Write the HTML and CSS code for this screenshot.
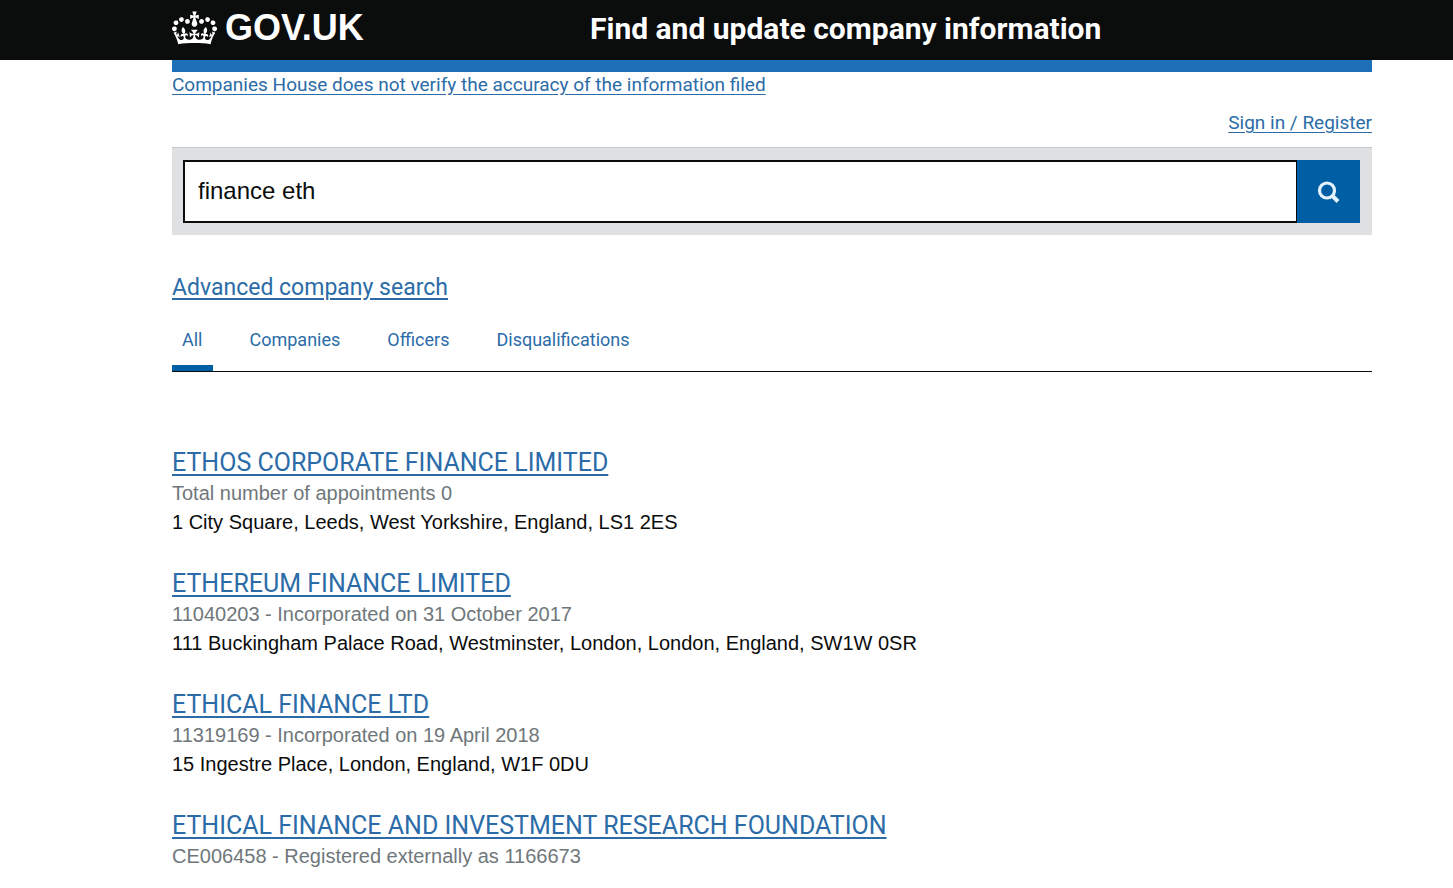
FILE: index.html
```html
<!DOCTYPE html>
<html lang="en">
<head>
  <meta charset="UTF-8" />
  <meta name="viewport" content="width=device-width, initial-scale=1.0" />
  <title>finance eth - Find and update company information - GOV.UK</title>
  <link rel="stylesheet" href="styles.css">
</head>
<body>
  <header class="site-header">
    <a class="logo" href="#">
      <svg class="crown" viewBox="0 0 132 97" aria-hidden="true">
        <path fill="currentColor" fill-rule="evenodd" d="M25 30.2c3.5 1.5 7.7-.2 9.1-3.7 1.5-3.6-.2-7.8-3.9-9.2-3.6-1.4-7.6.3-9.1 3.9-1.4 3.5.3 7.5 3.9 9zM9 39.5c3.6 1.5 7.8-.2 9.2-3.7 1.5-3.6-.2-7.8-3.9-9.1-3.6-1.5-7.6.2-9.1 3.8-1.4 3.5.3 7.5 3.8 9zM4.4 57.2c3.5 1.5 7.7-.2 9.1-3.8 1.5-3.6-.2-7.7-3.9-9.1-3.5-1.5-7.6.3-9.1 3.8-1.4 3.5.3 7.6 3.9 9.1zm38.3-21.4c3.5 1.5 7.7-.2 9.1-3.8 1.5-3.6-.2-7.7-3.9-9.1-3.6-1.5-7.6.3-9.1 3.8-1.3 3.6.4 7.7 3.9 9.1zm64.4-5.6c-3.6 1.5-7.8-.2-9.1-3.7-1.5-3.6.2-7.8 3.8-9.2 3.6-1.4 7.7.3 9.2 3.9 1.3 3.5-.4 7.5-3.9 9zm15.9 9.3c-3.6 1.5-7.7-.2-9.1-3.7-1.5-3.6.2-7.8 3.7-9.1 3.6-1.5 7.7.2 9.2 3.8 1.5 3.5-.3 7.5-3.8 9zm4.7 17.7c-3.6 1.5-7.8-.2-9.2-3.8-1.5-3.6.2-7.7 3.9-9.1 3.6-1.5 7.7.3 9.2 3.8 1.3 3.5-.4 7.6-3.9 9.1zM89.3 35.8c-3.6 1.5-7.8-.2-9.2-3.8-1.4-3.6.2-7.7 3.9-9.1 3.6-1.5 7.7.3 9.2 3.8 1.4 3.6-.3 7.7-3.9 9.1zM69.7 17.7l8.9 4.7V9.3l-8.9 2.8c-.2-.3-.5-.6-.9-.9L72.4 0H59.6l3.5 11.2c-.3.3-.6.5-.9.9l-8.8-2.8v13.1l8.8-4.7c.3.3.6.7.9.9l-5 15.4v.1c-.2.8-.4 1.6-.4 2.4 0 4.1 3.1 7.5 7 8.1h.2c.3 0 .7.1 1 .1.4 0 .7 0 1-.1h.2c4-.6 7.1-4.1 7.1-8.1 0-.8-.1-1.7-.4-2.4V34l-5.1-15.4c.4-.2.7-.6 1-.9zM66 92.8c16.9 0 32.8 1.1 47.1 3.2 4-16.9 8.9-26.7 14-33.5l-9.6-3.4c1 4.9 1.1 7.2 0 10.2-1.5-1.4-3-4.3-4.2-8.7L108.6 76c2.8-2 5-3.2 7.5-3.3-4.4 9.4-10 11.9-13.6 11.2-4.3-.8-6.3-4.6-5.6-7.9 1-4.7 5.7-5.9 8-.5 4.3-8.7-3-11.4-7.6-8.8 7.1-7.2 7.9-13.5 2.1-21.1-8 6.1-8.1 12.3-4.5 20.8-4.7-5.4-12.1-2.5-9.5 6.2 3.4-5.2 7.9-2 7.2 3.1-.6 4.3-6.4 7.8-13.5 7.2-10.3-.9-10.9-8-11.2-13.8 2.5-.5 7.1 1.8 11 7.3L80.2 60c-4.1 4.4-8 5.3-12.3 5.4 1.4-4.4 8-11.6 8-11.6H55.5s6.4 7.2 7.9 11.6c-4.2-.1-8-1-12.3-5.4l1.4 16.4c3.9-5.5 8.5-7.7 10.9-7.3-.3 5.8-.9 12.8-11.1 13.8-7.2.6-12.9-2.9-13.5-7.2-.7-5 3.8-8.3 7.1-3.1 2.7-8.7-4.6-11.6-9.4-6.2 3.7-8.5 3.6-14.7-4.6-20.8-5.8 7.6-5 13.9 2.2 21.1-4.7-2.6-11.9.1-7.7 8.8 2.3-5.5 7.1-4.2 8.1.5.7 3.3-1.3 7.1-5.7 7.9-3.5.7-9-1.8-13.5-11.2 2.5.1 4.7 1.3 7.5 3.3l-4.7-15.4c-1.2 4.4-2.7 7.2-4.3 8.7-1.1-3-.9-5.3 0-10.2l-9.5 3.4c5 6.9 9.9 16.7 14 33.5 14.8-2.1 30.8-3.2 47.7-3.2z"/>
      </svg>
      <span>GOV.UK</span>
    </a>
    <a class="service-name" href="#">Find and update company information</a>
  </header>

  <div class="container">
    <div class="notice">
      <a href="#">Companies House does not verify the accuracy of the information filed</a>
    </div>
    <nav class="account">
      <a href="#">Sign in / Register</a>
    </nav>

    <main>
      <form class="search" role="search" onsubmit="return false">
        <input type="text" name="q" value="finance eth" aria-label="Search companies and officers">
        <button type="submit" aria-label="Search">
          <svg viewBox="0 0 24 24" aria-hidden="true">
            <circle cx="10" cy="10.5" r="7.5" fill="none" stroke="currentColor" stroke-width="3.2"/>
            <path d="M15 15.5l6 6" stroke="currentColor" stroke-width="4"/>
          </svg>
        </button>
      </form>

      <a class="advanced" href="#">Advanced company search</a>

      <nav class="tabs">
        <a class="active" href="#">All</a>
        <a href="#">Companies</a>
        <a href="#">Officers</a>
        <a href="#">Disqualifications</a>
      </nav>

      <ul class="results">
        <li>
          <h3><a href="#">ETHOS CORPORATE FINANCE LIMITED</a></h3>
          <p class="meta">Total number of appointments 0</p>
          <p>1 City Square, Leeds, West Yorkshire, England, LS1 2ES</p>
        </li>
        <li>
          <h3><a href="#">ETHEREUM FINANCE LIMITED</a></h3>
          <p class="meta">11040203 - Incorporated on 31 October 2017</p>
          <p>111 Buckingham Palace Road, Westminster, London, London, England, SW1W 0SR</p>
        </li>
        <li>
          <h3><a href="#">ETHICAL FINANCE LTD</a></h3>
          <p class="meta">11319169 - Incorporated on 19 April 2018</p>
          <p>15 Ingestre Place, London, England, W1F 0DU</p>
        </li>
        <li>
          <h3><a href="#">ETHICAL FINANCE AND INVESTMENT RESEARCH FOUNDATION</a></h3>
          <p class="meta">CE006458 - Registered externally as 1166673</p>
        </li>
      </ul>
    </main>
  </div>
</body>
</html>
```
FILE: styles.css
```css
:root {
  --black: #0b0c0c;
  --link: #2b6ca8;
  --blue: #1d70b8;
  --button: #005ea5;
  --grey: #dee0e2;
  --soft-text: #6f777b;
  --transport: Roboto, "Noto Sans", sans-serif;
  --arial: "Liberation Sans", Arial, sans-serif;
}

* {
  margin: 0;
  padding: 0;
  box-sizing: border-box;
}

body {
  background: #fff;
  color: var(--black);
  font-family: var(--transport);
  font-size: 19px;
  line-height: 24px;
}

a {
  color: var(--link);
  text-underline-offset: 3px;
}

.site-header {
  display: grid;
  grid-template-columns: 418px 1fr;
  align-items: center;
  height: 60px;
  padding: 0 81px 0 172px;
  background: var(--black);
}

.site-header a {
  color: #fff;
  text-decoration: none;
  font-weight: 700;
}

.logo {
  display: flex;
  align-items: center;
  gap: 8px;
  padding-bottom: 4px;
  font-family: var(--arial);
  font-size: 36px;
  line-height: 40px;
}

.crown {
  width: 45px;
  height: 34px;
}

.service-name {
  padding-bottom: 2px;
  font-size: 30px;
  line-height: 32px;
}

.container {
  margin: 0 81px 0 172px;
}

.notice {
  padding-top: 1px;
  border-top: 12px solid var(--blue);
}

.account {
  padding: 14px 0 12px;
  text-align: right;
}

.search {
  display: flex;
  padding: 12px 12px 12px 11px;
  border-top: 1px solid #c4c7c9;
  background: var(--grey);
}

.search input {
  flex: 1;
  min-width: 0;
  height: 63px;
  padding: 0 14px 2px 13px;
  border: 2px solid var(--black);
  border-right-width: 1px;
  border-radius: 0;
  font-family: var(--arial);
  font-size: 24px;
  color: var(--black);
}

.search button {
  display: flex;
  align-items: center;
  justify-content: center;
  width: 63px;
  border: none;
  background: var(--button);
  color: #e4f2fd;
  cursor: pointer;
}

.search svg {
  width: 24px;
  height: 24px;
}

.advanced {
  display: inline-block;
  margin-top: 38px;
  font-size: 23px;
  line-height: 30px;
}

.tabs {
  display: flex;
  gap: 27px;
  margin-top: 25px;
  border-bottom: 1px solid var(--black);
  font-size: 18px;
}

.tabs a {
  padding: 0 10px 13px;
  border-bottom: 6px solid transparent;
  text-decoration: none;
}

.tabs .active {
  border-bottom-color: var(--button);
}

.results {
  padding-top: 75px;
  list-style: none;
  font-family: var(--arial);
  font-size: 20px;
  line-height: 29px;
}

.results li {
  margin-bottom: 31px;
}

.results h3 {
  font-family: var(--transport);
  font-size: 25px;
  font-weight: 400;
  line-height: 32px;
}

.results .meta {
  color: var(--soft-text);
}
```
